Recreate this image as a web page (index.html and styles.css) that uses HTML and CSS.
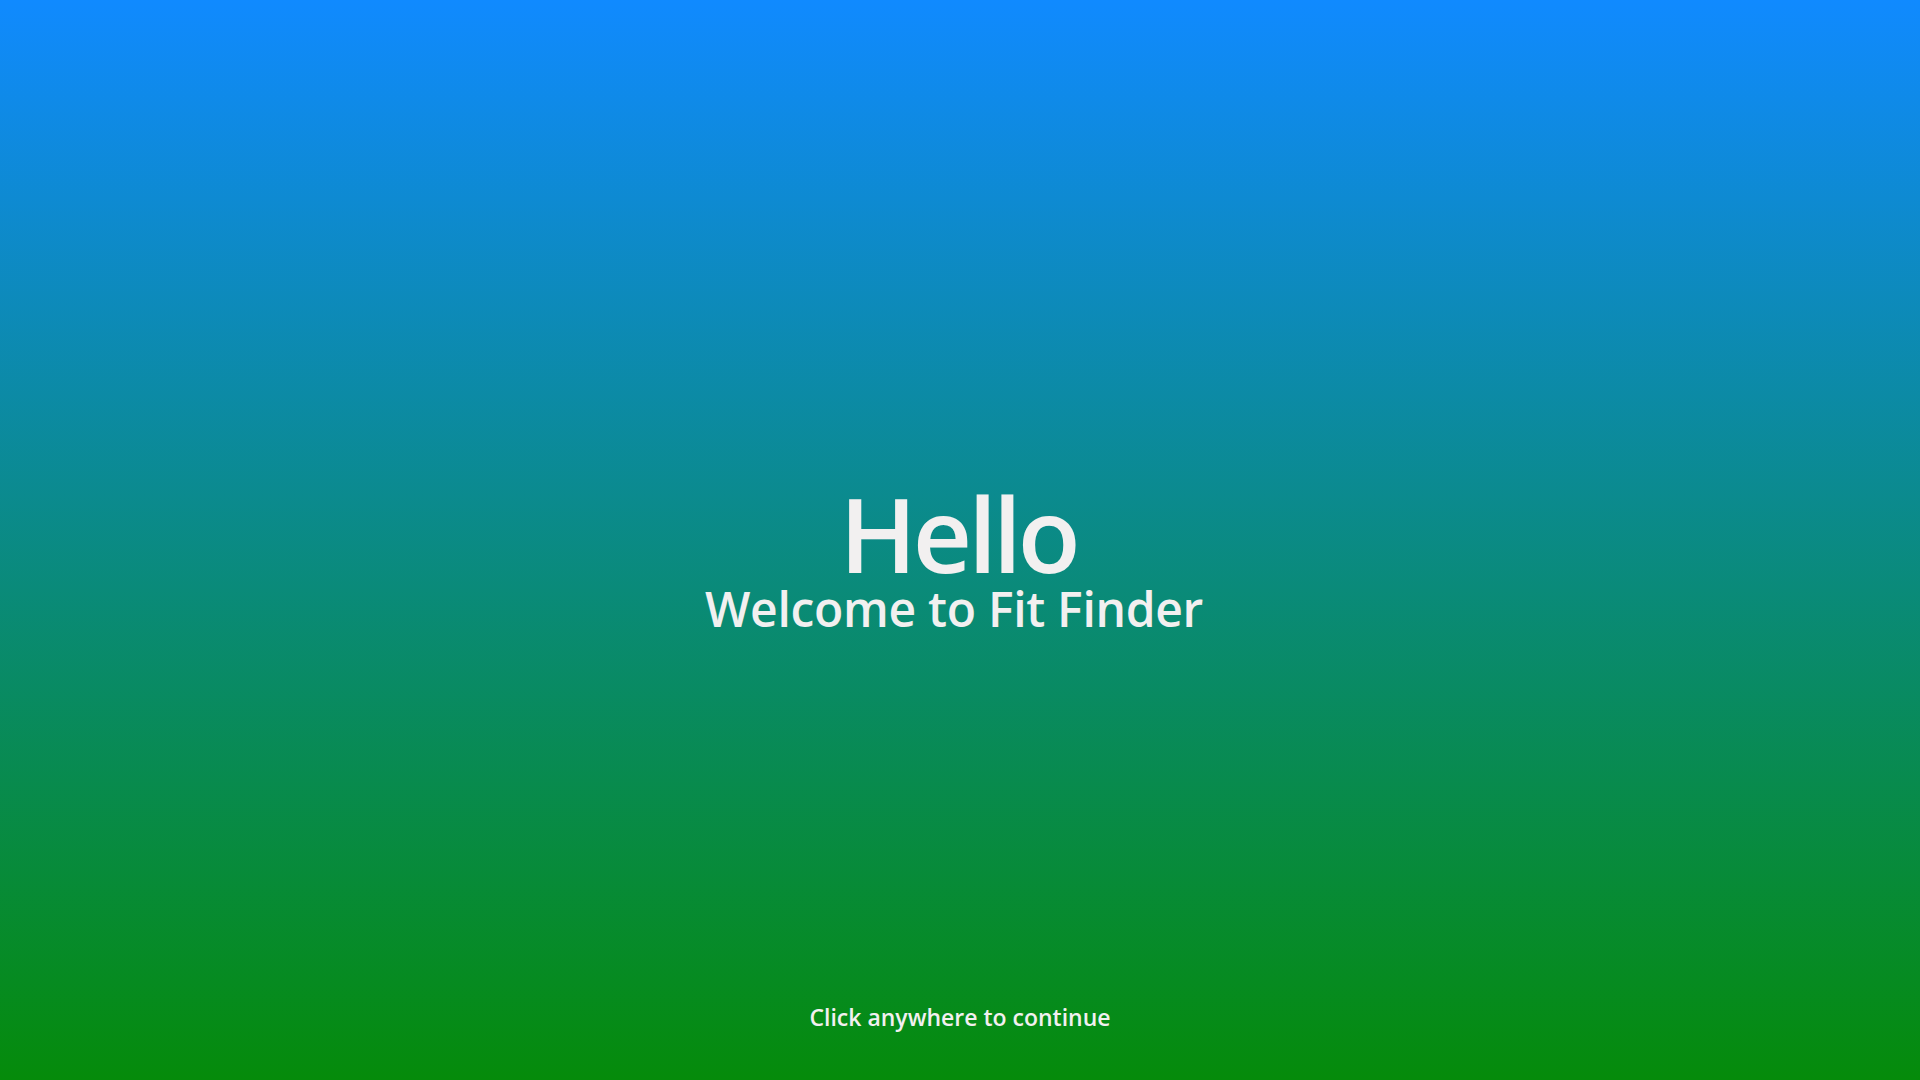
FILE: index.html
```html
<!DOCTYPE html>
<html lang="en">
<head>
<meta charset="utf-8">
<title>Fit Finder</title>
<link rel="stylesheet" href="styles.css">
</head>
<body>
<main class="splash">
  <div class="greeting">
    <h1 class="hello">Hello</h1>
    <p class="welcome">Welcome to Fit Finder</p>
  </div>
  <p class="hint">Click anywhere to continue</p>
</main>
</body>
</html>
```
FILE: styles.css
```css
html, body {
  margin: 0;
  padding: 0;
  height: 100%;
}
body {
  font-family: "Open Sans", "Noto Sans", sans-serif;
  color: #f2f0f0;
}
.splash {
  height: 100vh;
  display: flex;
  flex-direction: column;
  align-items: center;
  background: linear-gradient(to bottom, #108aff 0%, #058b0a 100%);
  cursor: pointer;
}
.greeting {
  flex: 1;
  display: flex;
  flex-direction: column;
  align-items: center;
  justify-content: center;
  padding-top: 116px;
}
.hello {
  margin: 0;
  padding-right: 4px;
  font-size: 103px;
  font-weight: 600;
  line-height: 100px;
  letter-spacing: -4px;
}
.welcome {
  margin: 0;
  padding-right: 12px;
  font-size: 48px;
  font-weight: 600;
  line-height: 52px;
  letter-spacing: -0.3px;
}
.hint {
  margin: 0 0 48px;
  font-size: 23px;
  font-weight: 600;
  line-height: 30px;
}
```
